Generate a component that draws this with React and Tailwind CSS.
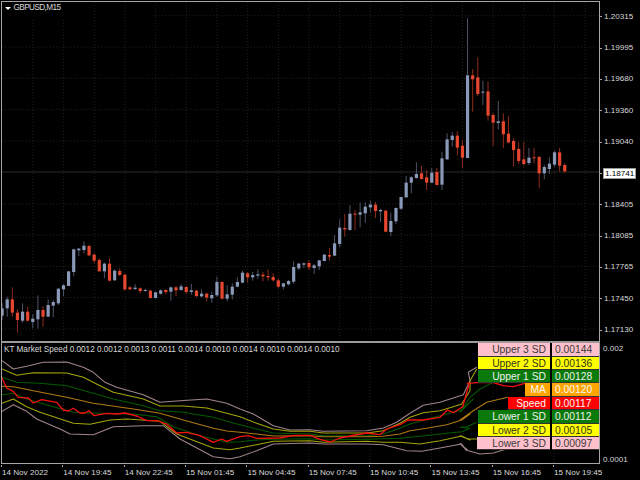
const A = 'g', R = 'r';
// [colour, wick top, wick bottom, body top, body bottom] read from the chart; first block offset by 170
const c1 = [
[A,398,450,415,437],[A,380,440,388,415],[R,352,440,388,428],[R,418,488,428,450],[A,400,458,425,452],[R,410,455,425,452],[A,432,475,446,456],[A,376,476,420,448],[R,408,470,420,440],[A,388,440,405,440],
[A,390,442,396,407],[A,355,405,356,400],[A,342,378,346,358],[A,304,348,304,348],[A,236,318,238,306],[A,234,258,236,241],[A,214,250,227,240],[R,224,258,228,256],[R,250,280,254,272],[R,265,305,270,304],
[A,278,324,281,304],[R,265,334,281,332],[A,298,332,302,331],[R,295,318,303,315],[R,312,362,314,358],[R,348,360,352,358],[A,342,360,353,357],[R,352,370,355,363],[A,356,365,360,363],[R,360,386,362,384],
[A,365,385,367,384],[A,358,374,361,371],[R,358,373,360,366],[A,350,392,352,365],[R,348,378,352,361],[A,342,362,349,360],[R,348,372,351,366],[A,342,374,361,366],[R,360,382,362,378],[A,358,382,371,379],
[R,368,394,371,383],[A,365,398,375,385],[A,320,380,336,376],[R,334,388,336,386],[A,346,394,373,386],[A,340,388,350,374],[A,322,352,336,350],[A,302,340,308,338],[R,306,338,310,322],[A,306,332,315,322],
[A,298,326,313,317],[R,306,334,314,319],[R,298,332,318,322],[R,310,334,321,331],[R,326,356,331,350],[A,340,358,340,350],[A,330,346,333,343],[A,274,342,291,335],[A,278,300,281,295],[A,278,294,280,284],
[R,270,300,279,292],[A,282,312,286,294],[A,270,300,271,289],[A,252,274,254,273],[R,234,272,255,260],[A,196,258,220,257],[A,148,232,173,222],[R,132,200,174,178],[A,106,182,131,180],[R,120,180,131,134],
[A,98,172,127,134],[A,96,158,110,130],[A,92,128,104,112],[R,96,144,104,123],[A,116,156,120,124],[R,120,186,122,185],[A,128,198,153,186],[A,112,162,114,154],[A,80,120,81,116],[A,18,84,38,82],
[A,18,70,22,38],[A,-23,26,12,24],[R,-13,28,10,27],[R,0,60,22,38],[A,-6,40,8,38],[R,-6,46,6,45],
];
const c2 = [
[A,455,570,475,554],[A,400,480,418,478],[A,396,440,407,420],[R,393,467,407,443],[R,420,505,437,473],[A,55,474,226,474],[R,207,335,226,238],[R,172,288,232,282],[A,242,315,275,278],[R,245,362,274,347],
[R,338,438,345,368],[A,303,388,364,369],[R,340,444,364,403],[R,349,430,401,427],[R,415,500,423,450],[R,427,492,447,483],[R,426,497,478,492],[A,444,495,473,489],[R,444,490,472,475],[R,468,565,471,520],
[A,494,538,501,520],[A,472,522,491,507],[A,452,500,457,494],[R,444,514,457,497],[R,490,520,495,514],
];
const candles = [
  ...c1.map(([k, a, b, c, d]) => [k, 170 + a / 3, 170 + b / 3, 170 + c / 3, 170 + d / 3]),
  ...c2.map(([k, a, b, c, d]) => [k, a / 3, b / 3, c / 3, d / 3]),
];

const pts = (x0, s) => s.trim().split(/\s+/).map(p => { const [x, y] = p.split(','); return `${(x0 + x / 3).toFixed(1)},${(335 + y / 3).toFixed(1)}`; }).join(' ');
const band = (a, b, c) => pts(0, a) + ' ' + pts(240, b) + ' ' + pts(460, c);

const lines = [
  ['#a08489', 1.05, band('6,80 40,105 80,97 130,85 200,84 250,100 280,115 315,145 350,160 430,182 480,205 540,200 620,195 680,208', '0,225 40,240 100,275 150,288 210,287 250,292 380,290 430,282 470,265 510,238 550,214 600,205 640,192 670,182 690,140', '25,115 50,100')],
  ['#a5a50a', 1.05, band('6,105 50,124 100,116 200,117 250,130 300,155 340,175 430,195 480,216 550,216 620,222 680,238', '0,248 50,268 100,285 150,292 210,292 250,297 380,297 430,290 480,268 510,250 550,236 600,230 640,218 665,210 690,170', '30,140 50,105')],
  ['#005a00', 1.05, band('6,130 50,145 120,148 200,155 280,178 340,195 430,215 480,230 550,235 640,250 680,262', '0,272 50,285 100,297 210,300 250,305 380,305 430,300 480,283 510,270 560,256 620,240 665,228 700,195', '0,235 30,190 60,165 100,145')],
  ['#b07a14', 1.05, band('6,157 40,158 100,170 200,190 280,208 400,225 480,238 550,258 640,283 680,291', '0,295 50,300 100,306 210,305 250,308 380,308 430,307 480,300 510,290 560,283 620,272 665,258 690,240', '0,258 40,230 80,205 143,190')],
  ['#005a00', 1.05, band('6,182 40,178 80,195 160,218 220,235 300,238 400,240 470,248 520,278 600,305 680,325', '0,323 50,318 100,316 210,314 250,318 380,316 430,314 480,313 540,307 620,298 665,293 690,283', '0,280 20,278 50,265')],
  ['#a5a50a', 1.05, band('6,208 40,195 80,218 120,235 220,268 270,271 330,258 380,255 480,262 530,300 640,342 690,347', '0,342 50,332 100,322 210,320 250,325 380,322 430,325 480,325 540,330 600,320 665,306 690,318', '0,305 25,315 55,315')],
  ['#a08489', 1.05, band('6,232 40,212 80,232 110,255 180,285 210,300 280,302 340,278 430,275 490,275 540,315 640,368 690,374', '0,368 50,350 100,330 210,327 250,330 380,330 430,332 500,350 545,352 600,342 665,330 680,350', '0,328 25,350 60,360 100,357 140,345')],
  ['#f51010', 1.3, band('6,132 20,162 40,172 55,190 85,192 100,207 125,197 170,205 190,228 205,231 220,223 240,237 255,237 267,230 282,245 320,238 350,240 375,237 410,246 440,260 470,260 500,270 530,297 560,295 600,305 640,325 665,315 680,322', '0,308 25,305 50,313 120,312 160,304 210,304 240,316 270,324 300,312 330,306 380,297 420,302 440,285 480,272 505,258 550,258 600,250 622,228 640,236 668,218 688,148', '22,148 50,146 100,146 130,155 160,158 195,148')],
];

const priceLabels = [
  '1.20315', '1.19995', '1.19680', '1.19360', '1.19040', '1.18741', '1.18405', '1.18085', '1.17765', '1.17450', '1.17130',
];
const timeLabels = ['14 Nov 2022', '14 Nov 19:45', '14 Nov 22:45', '15 Nov 01:45', '15 Nov 04:45', '15 Nov 07:45', '15 Nov 10:45', '15 Nov 13:45', '15 Nov 16:45', '15 Nov 19:45'];
const rows = [
  { label: 'Upper 3 SD', value: '0.00144', w: 'w-[72px]', bg: 'bg-[#ffc0cb]', fg: 'text-[#3a3a3a]' },
  { label: 'Upper 2 SD', value: '0.00136', w: 'w-[72px]', bg: 'bg-[#ffff00]', fg: 'text-[#33331a]' },
  { label: 'Upper 1 SD', value: '0.00128', w: 'w-[72px]', bg: 'bg-[#0a7a0a]', fg: 'text-[#f0f0f0]' },
  { label: 'MA', value: '0.00120', w: 'w-[25px]', bg: 'bg-[#ffa500]', fg: 'text-[#f8f8f8]' },
  { label: 'Speed', value: '0.00117', w: 'w-[42.5px]', bg: 'bg-[#ff0000]', fg: 'text-[#f8f8f8]' },
  { label: 'Lower 1 SD', value: '0.00112', w: 'w-[72px]', bg: 'bg-[#0a7a0a]', fg: 'text-[#f0f0f0]' },
  { label: 'Lower 2 SD', value: '0.00105', w: 'w-[72px]', bg: 'bg-[#ffff00]', fg: 'text-[#33331a]' },
  { label: 'Lower 3 SD', value: '0.00097', w: 'w-[73px]', bg: 'bg-[#ffc0cb]', fg: 'text-[#3a3a3a]' },
];

const vGrid = Array.from({ length: 19 }, (_, i) => 33 + i * 30.67);
const hGrid = [47, 78.3, 109.4, 141, 204, 235, 266.5, 297.5, 329];

export default function App() {
  return (
    <div className="w-[640px] h-[480px] bg-black flex flex-col overflow-hidden pt-px pl-px font-['Liberation_Sans',sans-serif] text-[#d8d8d8]">
      {/* price chart + axis */}
      <div className="flex h-[340px] shrink-0">
        <div className="relative w-[599px] h-[340px] border-t border-l border-r border-[#a6a6a6]">
          <svg className="block w-[597px] h-[339px]" viewBox="2 2 597 339">
            <g stroke="#202020" strokeWidth="1" strokeDasharray="1 2" fill="none">
              {vGrid.map(x => <line key={x} x1={x} x2={x} y1={x < 90 ? 20 : 2} y2="341" />)}
              <line x1="153" x2="599" y1="15.7" y2="15.7" />
              {hGrid.map(y => <line key={y} x1="2" x2="599" y1={y} y2={y} />)}
            </g>
            <line x1="2" x2="599" y1="172" y2="172" stroke="#2a2a2a" strokeWidth="1" />
            {candles.map(([k, wt, wb, bt, bb], i) => {
              const x = 2.1 + 5.115 * i;
              return (
                <g key={i}>
                  <line x1={x} x2={x} y1={wt} y2={wb} stroke={k === 'g' ? '#4d5568' : '#8f2c1e'} strokeWidth="1" />
                  <rect x={x - 1.6} y={bt} width="3.2" height={Math.max(bb - bt, 1)} fill={k === 'g' ? '#8b99b8' : '#e8472f'} />
                </g>
              );
            })}
          </svg>
          <div className="absolute left-[3px] top-[1px] flex items-center gap-[2.5px] text-[8.2px] leading-[10px] tracking-[-0.58px]">
            <span className="w-0 h-0 border-l-[3px] border-r-[3px] border-t-[3px] border-l-transparent border-r-transparent border-t-white" />
            <span>GBPUSD,M15</span>
          </div>
        </div>
        <div className="flex-1 flex flex-col">
          {priceLabels.map(p => (
            <div key={p} className="h-[31.35px] shrink-0 flex items-center">
              <span className="w-[2px] h-px bg-[#a6a6a6] mr-[2px]" />
              <span className={p === '1.18741' ? 'bg-white text-black border border-[#999] text-[8.1px] leading-[9px] px-[1px] ml-[-1px]' : 'text-[8.1px] leading-[10px]'}>{p}</span>
            </div>
          ))}
        </div>
      </div>

      {/* separator */}
      <div className="h-[2px] w-[599px] shrink-0 bg-[#9a9a9a]" />

      {/* indicator + axis */}
      <div className="flex h-[121px] shrink-0">
        <div className="relative w-[599px] h-[121px] border-l border-r border-b border-[#a6a6a6]">
          <svg className="block w-[597px] h-[120px]" viewBox="2 344 597 120">
            <g stroke="#202020" strokeWidth="1" strokeDasharray="1 2" fill="none">
              {Array.from({ length: 9 }, (_, i) => 63.4 + i * 61.35).map(x => <line key={x} x1={x} x2={x} y1="358" y2="464" />)}
            </g>
            {lines.map(([color, w, p], i) => (
              <polyline key={i} points={p} fill="none" stroke={color} strokeWidth={w} strokeLinejoin="round" />
            ))}
          </svg>
          <div className="absolute left-[2px] top-[2px] text-[8.18px] leading-[10px] whitespace-nowrap">
            KT Market Speed 0.0012 0.0012 0.0013 0.0011 0.0014 0.0010 0.0014 0.0010 0.0014 0.0010
          </div>
          <div className="absolute right-0 top-[0.3px] flex flex-col text-[10.3px] leading-[13px]">
            {rows.map(r => (
              <div key={r.label} className="flex justify-end h-[13.38px] shrink-0">
                <div className={`${r.w} ${r.bg} ${r.fg} text-right pr-[4px] border-b border-[#333]`}>{r.label}</div>
                <div className={`w-[47.5px] ml-[1.5px] pl-[3.5px] ${r.bg} ${r.fg} text-left border-b border-[#333]`}>{r.value}</div>
              </div>
            ))}
          </div>
        </div>
        <div className="flex-1 flex flex-col justify-between pl-[3px] pt-[0.5px] text-[8.1px] leading-[10px]">
          <span>0.002</span>
          <span className="mb-[-1px]">0.0001</span>
        </div>
      </div>

      {/* time axis */}
      <div className="flex text-[8.1px] leading-[10px] pt-[1px]">
        {timeLabels.map(t => (
          <div key={t} className="w-[61.35px] shrink-0">
            <span className="block w-px h-[2px] bg-[#a6a6a6]" />
            <span className="block whitespace-nowrap ml-[1px] mt-[1px]">{t}</span>
          </div>
        ))}
      </div>
    </div>
  );
}
